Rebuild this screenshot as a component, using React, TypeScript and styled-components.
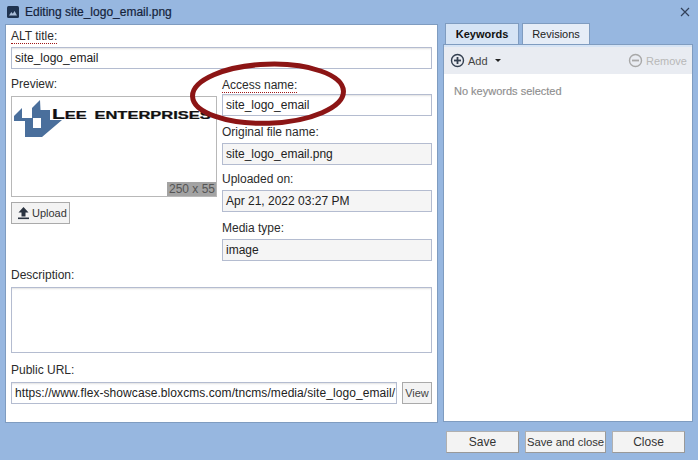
import React from "react";
import styled, { createGlobalStyle } from "styled-components";

const Global = createGlobalStyle`
  html, body { margin: 0; padding: 0; }
  body { font-family: "Liberation Sans", Arial, sans-serif; font-size: 12px; color: #333; }
`;

const Window = styled.div`
  position: relative;
  width: 698px;
  height: 460px;
  overflow: hidden;
  background: #97b7e0;
  display: flex;
  flex-direction: column;
`;

const TitleBar = styled.div`
  height: 23px;
  display: flex;
  align-items: center;
  padding: 0 7px;
  gap: 6px;
  font-weight: 400;
  color: #15233b;
  -webkit-text-stroke: 0.2px #15233b;
  font-size: 12px;
`;

const TitleText = styled.span`
  flex: 1;
`;

const CloseIcon = styled.svg`
  margin-right: 1px;
`;

const Body = styled.div`
  height: 400px;
  display: flex;
  padding: 0 5px;
  gap: 5px;
`;

const LeftPanel = styled.div`
  width: 433px;
  height: 399px;
  margin-top: 1px;
  box-sizing: border-box;
  background: #fff;
  border: 1px solid #7f9cc0;
  padding: 0 5px;
  display: flex;
  flex-direction: column;
`;

const Label = styled.div`
  height: 14px;
  line-height: 14px;
  font-size: 12px;
  color: #2b2b2b;
`;

const DottedLabel = styled.span`
  display: inline-block;
  height: 14px;
  line-height: 14px;
  border-bottom: 1px dotted #a01818;
`;

const Field = styled.div<{ $readonly?: boolean }>`
  box-sizing: border-box;
  height: 22px;
  line-height: 20px;
  padding: 0 3px;
  border: 1px solid #b4bcd0;
  background: ${(p) => (p.$readonly ? "#f5f5f5" : "#fff")};
  box-shadow: ${(p) => (p.$readonly ? "none" : "inset 0 2px 2px -1px #e2e2e2")};
  color: #222;
  white-space: nowrap;
  overflow: hidden;
`;

const TallField = styled(Field)`
  height: 66px;
`;

const AltBlock = styled.div`
  margin-top: 4px;
  display: flex;
  flex-direction: column;
  gap: 4px;
`;

const Columns = styled.div`
  display: flex;
  margin-top: 8px;
  gap: 5px;
  height: 191px;
`;

const PreviewColumn = styled.div`
  width: 206px;
  display: flex;
  flex-direction: column;
`;

const PreviewBox = styled.div`
  position: relative;
  box-sizing: border-box;
  margin-top: 5px;
  height: 101px;
  border: 1px solid #b8b8b8;
  background: #fff;
`;

const LogoSvg = styled.svg`
  display: block;
  width: 204px;
  height: 45px;
`;

const SizeBadge = styled.div`
  position: absolute;
  right: 0;
  bottom: 0;
  height: 14px;
  line-height: 14px;
  padding: 0 1px 0 2px;
  background: #a3a3a3;
  color: #555;
`;

const UploadButton = styled.button`
  margin-top: 5px;
  align-self: flex-start;
  box-sizing: border-box;
  width: 59px;
  height: 22px;
  display: flex;
  align-items: center;
  gap: 2px;
  padding: 0 0 0 5px;
  font: inherit;
  font-size: 11px;
  color: #333;
  background: #f3f3f3;
  border: 1px solid #aaa;
  border-radius: 0;
`;

const MetaColumn = styled.div`
  width: 210px;
  display: flex;
  flex-direction: column;
`;

const MetaItem = styled.div`
  display: flex;
  flex-direction: column;
  gap: 4px;
  height: 48px;
`;

const AccessItem = styled(MetaItem)`
  height: 47px;
  gap: 2px;
  margin-top: 1px;
`;

const MediaItem = styled(MetaItem)`
  margin-top: 1px;
`;

const DescBlock = styled.div`
  display: flex;
  flex-direction: column;
  gap: 5px;
`;

const UrlBlock = styled.div`
  margin-top: 10px;
  display: flex;
  flex-direction: column;
  gap: 5px;
`;

const UrlRow = styled.div`
  display: flex;
  gap: 5px;
`;

const UrlField = styled(Field)`
  width: 386px;
  flex: none;
  letter-spacing: 0.07px;
`;

const ViewButton = styled.button`
  box-sizing: border-box;
  width: 30px;
  height: 22px;
  padding: 0;
  font: inherit;
  font-size: 11px;
  color: #444;
  background: #f3f3f3;
  border: 1px solid #aaa;
`;

const RightPanel = styled.div`
  width: 250px;
  display: flex;
  flex-direction: column;
`;

const Tabs = styled.div`
  display: flex;
  gap: 3px;
  height: 21px;
  padding-left: 2px;
`;

const Tab = styled.div<{ $active?: boolean }>`
  box-sizing: border-box;
  height: 21px;
  width: ${(p) => (p.$active ? "74px" : "68px")};
  text-align: center;
  line-height: 20px;
  color: ${(p) => (p.$active ? "#111" : "#222")};
  font-weight: ${(p) => (p.$active ? 700 : 400)};
  font-size: 11px;
  background: ${(p) => (p.$active ? "#d6e4f5" : "#e6edf7")};
  border: 1px solid #7f9cc0;
  border-bottom: none;
`;

const TabStrip = styled.div`
  height: 3px;
  box-sizing: border-box;
  background: #d6e4f5;
  border: 1px solid #7f9cc0;
  border-bottom: none;
`;

const TabBody = styled.div`
  flex: 1;
  background: #fff;
  border: 1px solid #7f9cc0;
  border-top: none;
  margin-bottom: 1px;
`;

const Toolbar = styled.div`
  height: 27px;
  background: #e9ecf2;
  display: flex;
  align-items: center;
  justify-content: space-between;
  padding: 0 5px 0 6px;
  font-size: 11px;
`;

const ToolGroup = styled.div<{ $disabled?: boolean }>`
  display: flex;
  align-items: center;
  gap: 3px;
  color: ${(p) => (p.$disabled ? "#b8b8b8" : "#444")};
`;

const Caret = styled.span`
  width: 0;
  height: 0;
  margin-left: 4px;
  border-left: 3px solid transparent;
  border-right: 3px solid transparent;
  border-top: 3px solid #222;
`;

const EmptyNote = styled.div`
  padding: 11px 10px;
  color: #8e8e8e;
  font-size: 11px;
  -webkit-text-stroke: 0.15px #8e8e8e;
`;

const Footer = styled.div`
  display: flex;
  justify-content: flex-end;
  gap: 6px;
  padding: 8px 13px 0 0;
`;

const FooterButton = styled.button<{ $w: number }>`
  box-sizing: border-box;
  width: ${(p) => p.$w}px;
  height: 22px;
  padding: 0;
  font: inherit;
  font-size: ${(p) => (p.$w > 75 ? "11.3px" : "12px")};
  white-space: nowrap;
  color: #333;
  background: #f3f3f3;
  border: 1px solid #b0b0b0;
  border-right-color: #999;
  border-bottom-color: #999;
`;

const Ring = styled.svg`
  position: absolute;
  left: 185px;
  top: 55px;
  width: 170px;
  height: 80px;
  pointer-events: none;
`;

const PlusIcon = ({ minus, color }: { minus?: boolean; color: string }) => (
  <svg width="15" height="15" viewBox="0 0 15 15" fill="none" stroke={color}>
    <circle cx="7.5" cy="7.5" r="6" strokeWidth="1.4" />
    <path d="M4 7.5h7" strokeWidth="1.8" />
    {!minus && <path d="M7.5 4v7" strokeWidth="1.8" />}
  </svg>
);

export default function App() {
  return (
    <>
      <Global />
      <Window>
        <TitleBar>
          <svg width="12" height="12" viewBox="0 0 12 12">
            <rect width="12" height="12" rx="1.5" fill="#1f3350" />
            <path d="M2 9.5 4.3 6l1.5 1.8L7.6 5 10 9.5z" fill="#a9bdd8" />
          </svg>
          <TitleText>Editing site_logo_email.png</TitleText>
          <CloseIcon width="10" height="10" viewBox="0 0 10 10" stroke="#33425a" strokeWidth="1.2">
            <path d="M1 1l8 8M9 1l-8 8" />
          </CloseIcon>
        </TitleBar>
        <Body>
          <LeftPanel>
            <AltBlock>
              <Label><DottedLabel>ALT title:</DottedLabel></Label>
              <Field>site_logo_email</Field>
            </AltBlock>
            <Columns>
              <PreviewColumn>
                <Label>Preview:</Label>
                <PreviewBox>
                  <LogoSvg viewBox="0 0 204 45">
                    <path
                      d="M2 19 10 11V21H20V11L28 3 28.5 13H38V23H50L30 40H13V24H2Z"
                      fill="#4a6f9c"
                    />
                    <rect x="21" y="21" width="8" height="10" fill="#fff" />
                    <text
                      transform="translate(40 22) scale(1.5 1)"
                      fontFamily="'Liberation Sans', sans-serif"
                      fontWeight="700"
                      fill="#111"
                      stroke="#111"
                      strokeWidth="0.25"
                      wordSpacing="2"
                    >
                      <tspan fontSize="14">L</tspan>
                      <tspan fontSize="11">EE ENTERPRISES</tspan>
                    </text>
                  </LogoSvg>
                  <SizeBadge>250 x 55</SizeBadge>
                </PreviewBox>
                <UploadButton>
                  <svg width="13" height="14" viewBox="0 0 13 14" fill="#2a3340">
                    <path d="M6.5 1 11.5 6.5H8.5V10.5H4.5V6.5H1.5Z" />
                    <rect x="1" y="11.5" width="11" height="1.6" />
                  </svg>
                  Upload
                </UploadButton>
              </PreviewColumn>
              <MetaColumn>
                <AccessItem>
                  <Label><DottedLabel>Access name:</DottedLabel></Label>
                  <Field>site_logo_email</Field>
                </AccessItem>
                <MetaItem>
                  <Label>Original file name:</Label>
                  <Field $readonly>site_logo_email.png</Field>
                </MetaItem>
                <MetaItem>
                  <Label>Uploaded on:</Label>
                  <Field $readonly>Apr 21, 2022 03:27 PM</Field>
                </MetaItem>
                <MediaItem>
                  <Label>Media type:</Label>
                  <Field $readonly>image</Field>
                </MediaItem>
              </MetaColumn>
            </Columns>
            <DescBlock>
              <Label>Description:</Label>
              <TallField />
            </DescBlock>
            <UrlBlock>
              <Label>Public URL:</Label>
              <UrlRow>
                <UrlField>https://www.flex-showcase.bloxcms.com/tncms/media/site_logo_email/</UrlField>
                <ViewButton>View</ViewButton>
              </UrlRow>
            </UrlBlock>
          </LeftPanel>
          <RightPanel>
            <Tabs>
              <Tab $active>Keywords</Tab>
              <Tab>Revisions</Tab>
            </Tabs>
            <TabStrip />
            <TabBody>
              <Toolbar>
                <ToolGroup>
                  <PlusIcon color="#333f50" />
                  Add
                  <Caret />
                </ToolGroup>
                <ToolGroup $disabled>
                  <PlusIcon minus color="#a8a8a8" />
                  Remove
                </ToolGroup>
              </Toolbar>
              <EmptyNote>No keywords selected</EmptyNote>
            </TabBody>
          </RightPanel>
        </Body>
        <Footer>
          <FooterButton $w={73}>Save</FooterButton>
          <FooterButton $w={81}>Save and close</FooterButton>
          <FooterButton $w={73}>Close</FooterButton>
        </Footer>
        <Ring viewBox="0 0 170 80">
          <ellipse cx="83" cy="38.7" rx="75.5" ry="29.5" fill="none" stroke="#8c1515" strokeWidth="5" transform="rotate(-2 83 38.7)" />
        </Ring>
      </Window>
    </>
  );
}
